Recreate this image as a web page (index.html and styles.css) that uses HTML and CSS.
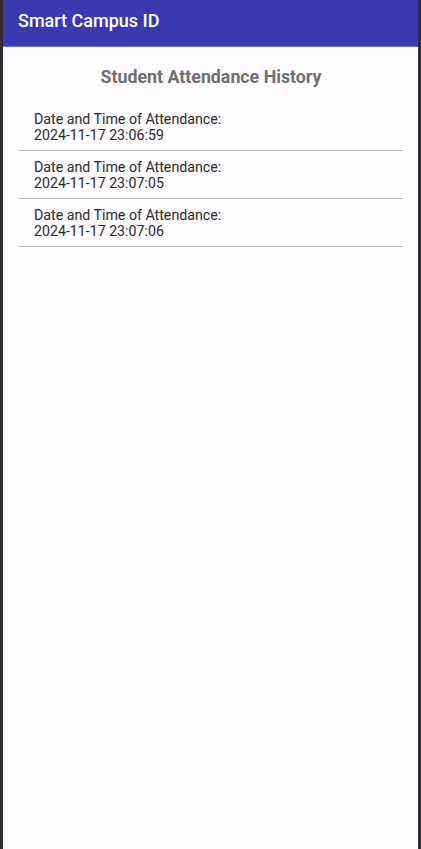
FILE: index.html
```html
<!DOCTYPE html>
<html>
<head>
<meta charset="utf-8">
<link rel="stylesheet" href="styles.css">
</head>
<body>
<div class="app">
  <header class="appbar"><span class="appbar-title">Smart Campus ID</span></header>
  <main class="content">
    <h1 class="title">Student Attendance History</h1>
    <ul class="list">
      <li class="item"><div>Date and Time of Attendance:</div><div>2024-11-17 23:06:59</div></li>
      <li class="item"><div>Date and Time of Attendance:</div><div>2024-11-17 23:07:05</div></li>
      <li class="item"><div>Date and Time of Attendance:</div><div>2024-11-17 23:07:06</div></li>
    </ul>
  </main>
</div>
</body>
</html>
```
FILE: styles.css
```css
html, body {
  margin: 0;
  padding: 0;
  height: 100%;
  background: #2f2d32;
}
body {
  font-family: Roboto, "Liberation Sans", sans-serif;
}
.app {
  margin: 0 3px 0 3px;
  height: 849px;
  background: #fdfbfe;
  display: flex;
  flex-direction: column;
}
.appbar {
  height: 47px;
  background: #3939b1;
  display: flex;
  align-items: center;
  padding-left: 15px;
  box-sizing: border-box;
  border-bottom: 1px solid #6d6dc6;
}
.appbar-title {
  color: #ffffff;
  font-size: 18px;
  font-weight: 500;
  margin-top: -6px;
}
.content {
  padding: 0 15px 0 16px;
}
.title {
  margin: 18px 0 0 0;
  height: 38px;
  font-size: 17.8px;
  font-weight: 700;
  color: #707070;
  text-align: center;
  line-height: 24px;
}
.list {
  list-style: none;
  margin: 0;
  padding: 0;
}
.item {
  padding: 8px 15px 7px 15px;
  border-bottom: 1px solid #b9b9b9;
  font-size: 14.2px;
  line-height: 16px;
  color: #2b2b2b;
}
```
